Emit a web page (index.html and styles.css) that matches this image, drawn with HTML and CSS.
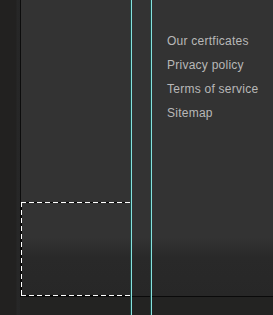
FILE: index.html
```html
<!DOCTYPE html>
<html>
<head>
<meta charset="utf-8">
<link rel="stylesheet" href="styles.css">
</head>
<body>
<div class="page">
  <div class="side"></div>
  <div class="vline"></div>
  <div class="col1 panel"><div class="dropzone"></div></div>
  <div class="gap panel"></div>
  <div class="links panel">
    <a class="link" href="#">Our certficates</a>
    <a class="link" href="#">Privacy policy</a>
    <a class="link" href="#">Terms of service</a>
    <a class="link" href="#">Sitemap</a>
  </div>
  <div class="hline"></div>
  <div class="guide guide-a"></div>
  <div class="guide guide-b"></div>
</div>
</body>
</html>
```
FILE: styles.css
```css
html, body {
  margin: 0;
  padding: 0;
  background: #232322;
  overflow: hidden;
}
.page {
  display: grid;
  grid-template-columns: 20px 1px 110px 1px 19px 1px 1fr;
  grid-template-rows: 296px 1px 18px;
  width: 273px;
  height: 315px;
}
.side {
  grid-column: 1;
  grid-row: 1 / 4;
  background: linear-gradient(to right, #222120 0, #222120 16px, #272727 17px, #262626 20px);
}
.vline {
  grid-column: 2;
  grid-row: 1;
  background: #0c0c0c;
}
.panel {
  grid-row: 1;
  background: linear-gradient(to bottom, #333333 0, #333333 238px, #292929 258px, #272727 100%);
}
.col1 {
  grid-column: 3;
  display: flex;
  flex-direction: column;
}
.dropzone {
  margin-top: auto;
  height: 94px;
  background:
    repeating-linear-gradient(to right, #ffffff 0 5px, #0a0a0a 5px 8px) top / 100% 1px no-repeat,
    repeating-linear-gradient(to right, #ffffff 0 5px, #0a0a0a 5px 8px) bottom / 100% 1px no-repeat,
    repeating-linear-gradient(to bottom, #ffffff 0 5px, #0a0a0a 5px 8px) left / 1px 100% no-repeat,
    repeating-linear-gradient(to bottom, #ffffff 0 5px, #0a0a0a 5px 8px) right / 1px 100% no-repeat;
}
.gap {
  grid-column: 5;
}
.links {
  grid-column: 7;
  display: flex;
  flex-direction: column;
  padding: 29px 0 0 15px;
}
.link {
  font-family: "Liberation Sans", Arial, sans-serif;
  font-size: 12px;
  line-height: 24px;
  letter-spacing: 0.25px;
  color: #b8b8b8;
  text-decoration: none;
  white-space: nowrap;
}
.hline {
  grid-column: 2 / 8;
  grid-row: 2;
  background: #0a0a0a;
}
.guide {
  grid-row: 1 / 4;
  background: #86e2de;
  box-shadow: -1px 0 0 #1d4543;
  z-index: 1;
}
.guide-a { grid-column: 4; }
.guide-b { grid-column: 6; }
```
